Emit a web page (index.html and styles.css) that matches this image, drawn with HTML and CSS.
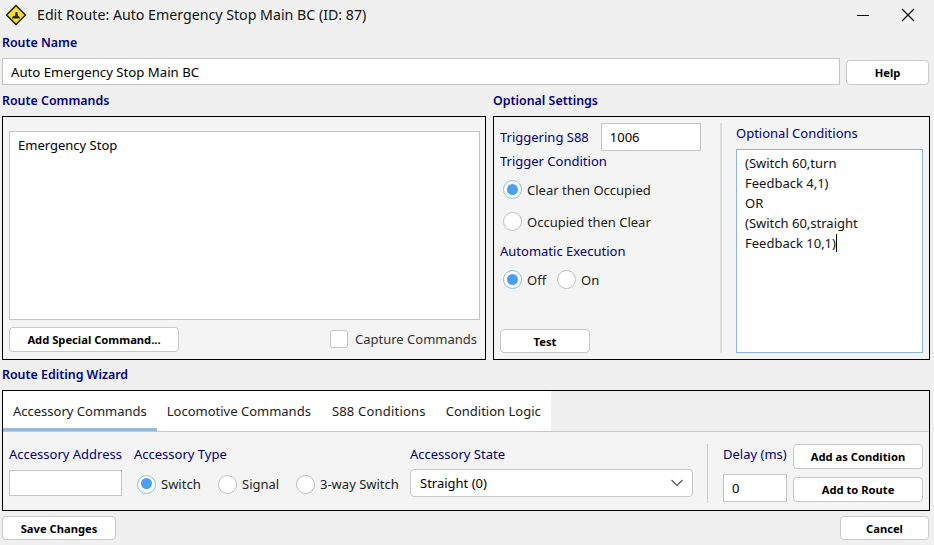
FILE: index.html
```html
<!DOCTYPE html>
<html lang="en">
<head>
    <meta charset="UTF-8">
    <meta name="viewport" content="width=device-width, initial-scale=1.0">
    <title>Edit Route</title>
    <link rel="stylesheet" href="styles.css">
</head>
<body>
    <div class="window">
        <header class="titlebar">
            <svg class="app-icon" width="24" height="24" viewBox="0 0 24 24">
                <path d="M12 2.5 L21.5 12 L12 21.5 L2.5 12 Z" fill="#f7dd2e" stroke="#2a2a1a" stroke-width="1.7" stroke-linejoin="round"/>
                <path d="M8 15.5 C8 13.6 9.4 13 11 12.8 L11.6 9 H13.4 L13.8 12.8 C15.2 13.2 16 14 16 15.5 Z" fill="#2a2a1a"/>
            </svg>
            <span class="title-text">Edit Route: Auto Emergency Stop Main BC (ID: 87)</span>
            <svg class="win-btn min-btn" width="12" height="12" viewBox="0 0 12 12"><path d="M0 6.5 H12" stroke="#111" stroke-width="1"/></svg>
            <svg class="win-btn close-btn" width="14" height="14" viewBox="0 0 14 14"><path d="M1 1 L13 13 M13 1 L1 13" stroke="#111" stroke-width="1.2"/></svg>
        </header>

        <div class="section-label name-label">Route Name</div>
        <div class="name-row">
            <input class="field name-field" type="text" value="Auto Emergency Stop Main BC">
            <button class="btn help-btn">Help</button>
        </div>

        <div class="columns">
            <section class="col-commands">
                <div class="section-label">Route Commands</div>
                <div class="panel commands-panel">
                    <div class="command-list">Emergency Stop</div>
                    <div class="commands-footer">
                        <button class="btn special-btn">Add Special Command...</button>
                        <label class="check-row"><span class="checkbox"></span>Capture Commands</label>
                    </div>
                </div>
            </section>
            <section class="col-settings">
                <div class="section-label">Optional Settings</div>
                <div class="panel settings-panel">
                    <div class="settings-left">
                        <div class="s88-row">
                            <span class="label">Triggering S88</span>
                            <input class="field s88-field" type="text" value="1006">
                        </div>
                        <div class="label trigger-label">Trigger Condition</div>
                        <div class="radio-line first"><span class="radio on"></span>Clear then Occupied</div>
                        <div class="radio-line second"><span class="radio"></span>Occupied then Clear</div>
                        <div class="label auto-label">Automatic Execution</div>
                        <div class="radio-inline">
                            <span class="radio-item"><span class="radio on"></span>Off</span>
                            <span class="radio-item"><span class="radio"></span>On</span>
                        </div>
                        <button class="btn test-btn">Test</button>
                    </div>
                    <div class="vline settings-line"></div>
                    <div class="settings-right">
                        <div class="label">Optional Conditions</div>
                        <div class="conditions">
                            <div>(Switch 60,turn</div>
                            <div>Feedback 4,1)</div>
                            <div>OR</div>
                            <div>(Switch 60,straight</div>
                            <div>Feedback 10,1)<span class="caret"></span></div>
                        </div>
                    </div>
                </div>
            </section>
        </div>

        <div class="section-label wizard-label">Route Editing Wizard</div>
        <div class="panel wizard">
            <div class="tabs">
                <div class="tab-strip">
                    <div class="tab active">Accessory Commands</div>
                    <div class="tab">Locomotive Commands</div>
                    <div class="tab tab-s88">S88 Conditions</div>
                    <div class="tab">Condition Logic</div>
                </div>
            </div>
            <div class="wizard-body">
                <div class="wiz-col addr-col">
                    <div class="label">Accessory Address</div>
                    <input class="field addr-field" type="text">
                </div>
                <div class="wiz-col type-col">
                    <div class="label">Accessory Type</div>
                    <div class="type-radios">
                        <span class="radio-item switch-item"><span class="radio on"></span>Switch</span>
                        <span class="radio-item signal-item"><span class="radio"></span>Signal</span>
                        <span class="radio-item"><span class="radio"></span>3-way Switch</span>
                    </div>
                </div>
                <div class="wiz-col state-col">
                    <div class="label">Accessory State</div>
                    <div class="select">
                        <span>Straight (0)</span>
                        <svg width="14" height="8" viewBox="0 0 14 8"><path d="M1.5 1 L7 6.5 L12.5 1" fill="none" stroke="#555" stroke-width="1.2"/></svg>
                    </div>
                </div>
                <div class="vline wizard-line"></div>
                <div class="delay-grid">
                    <div class="label delay-label">Delay (ms)</div>
                    <button class="btn">Add as Condition</button>
                    <input class="field delay-field" type="text" value="0">
                    <button class="btn route-btn">Add to Route</button>
                </div>
            </div>
        </div>

        <footer class="footer">
            <button class="btn save-btn">Save Changes</button>
            <button class="btn cancel-btn">Cancel</button>
        </footer>
    </div>
</body>
</html>
```
FILE: styles.css
```css
* {
    box-sizing: border-box;
}
html, body {
    margin: 0;
    padding: 0;
}
body {
    width: 934px;
    height: 545px;
    overflow: hidden;
    background: #f0f0f0;
    color: #000;
    font-family: "Noto Sans", "Open Sans", sans-serif;
    font-size: 13px;
    line-height: 18px;
}
.window {
    padding: 0 4px 0 2px;
}
.titlebar {
    display: flex;
    align-items: center;
    height: 30px;
    margin-left: -2px;
    margin-right: -4px;
    padding-left: 4px;
}
.app-icon {
    flex: none;
}
.title-text {
    margin-left: 9px;
    font-size: 14.2px;
    color: #111;
}
.min-btn {
    margin-left: auto;
}
.close-btn {
    margin-left: 32px;
    margin-right: 19px;
}
.section-label {
    font-weight: 600;
    font-size: 12.4px;
    color: #000080;
}
.name-label {
    margin-top: 4px;
}
.label {
    color: #000080;
    white-space: nowrap;
}
.name-row {
    display: flex;
    align-items: center;
    gap: 6px;
    margin-top: 6px;
    height: 27px;
}
.field {
    border: 1.5px solid #c4c4c4;
    background: #fff;
    font: inherit;
    color: #000;
    padding: 0 8px;
    outline: none;
}
.name-field {
    width: 838px;
    height: 27px;
    font-size: 13.2px;
}
.btn {
    height: 25px;
    border: 1px solid #c8c8c8;
    border-radius: 4px;
    background: #fff;
    font-family: inherit;
    font-size: 11.2px;
    font-weight: 700;
    color: #000;
    padding: 0;
}
.help-btn {
    width: 83px;
    margin-top: 1px;
}
.columns {
    display: flex;
    gap: 7px;
    margin-top: 7px;
}
.col-commands {
    width: 484px;
}
.col-settings {
    width: 437px;
}
.panel {
    border: 1px solid #000;
    background: #f4f4f4;
}
.commands-panel, .settings-panel {
    height: 244px;
    margin-top: 6px;
}
.commands-panel {
    padding: 14px 5px 0 6px;
}
.command-list {
    height: 189px;
    border: 1px solid #c4c4c4;
    background: #fff;
    padding: 4px 8px;
}
.commands-footer {
    display: flex;
    justify-content: space-between;
    align-items: center;
    margin-top: 7px;
}
.special-btn {
    width: 170px;
    height: 25px;
}
.check-row {
    display: flex;
    align-items: center;
    gap: 7px;
    color: #333;
    margin-right: 3px;
    margin-top: -2px;
}
.checkbox {
    width: 18px;
    height: 18px;
    border: 1.5px solid #c4c4c4;
    border-radius: 3px;
    background: #fff;
}
.settings-panel {
    display: flex;
    padding: 6px;
}
.settings-left {
    display: flex;
    flex-direction: column;
    width: 220px;
    height: 230px;
}
.s88-row {
    display: flex;
    align-items: center;
    gap: 12px;
    height: 28px;
}
.s88-field {
    width: 100px;
    height: 28px;
}
.trigger-label {
    margin-top: 1px;
}
.radio-line {
    display: flex;
    align-items: center;
    gap: 5px;
    margin-left: 3px;
    color: #222;
}
.radio-line.first {
    margin-top: 10px;
}
.radio-line.second {
    margin-top: 13px;
}
.auto-label {
    margin-top: 11px;
}
.radio-inline {
    display: flex;
    gap: 11px;
    margin-left: 3px;
    margin-top: 10px;
    color: #222;
}
.radio-item {
    display: inline-flex;
    align-items: center;
    gap: 5px;
    color: #222;
}
.radio {
    display: inline-block;
    flex: none;
    position: relative;
    width: 19px;
    height: 19px;
    border: 1.5px solid #c0c0c0;
    border-radius: 50%;
    background: #fff;
}
.radio.on {
    border-color: #8dbdf0;
}
.radio.on::after {
    content: "";
    position: absolute;
    left: 2.5px;
    top: 2.5px;
    width: 11px;
    height: 11px;
    border-radius: 50%;
    background: #4c9fec;
}
.test-btn {
    width: 90px;
    height: 24px;
    margin-top: auto;
}
.vline {
    flex: none;
    width: 2px;
    background: #dcdcdc;
}
.settings-line {
    height: 230px;
}
.settings-right {
    margin-left: 14px;
    padding-top: 1px;
}
.conditions {
    width: 187px;
    height: 204px;
    margin-top: 7px;
    border: 1px solid #8fb4da;
    background: #fff;
    padding: 3px 8px;
    line-height: 20px;
    color: #111;
}
.caret {
    display: inline-block;
    width: 1px;
    height: 18px;
    background: #000;
    vertical-align: -4px;
}
.wizard-label {
    margin-top: 6px;
}
.wizard {
    height: 121px;
    margin-top: 6px;
}
.tabs {
    height: 41px;
    border-bottom: 1px solid #c8c8c8;
    background: #f0f0f0;
}
.tab-strip {
    display: flex;
    width: 548px;
    height: 40px;
    background: #fff;
}
.tab {
    height: 40px;
    padding: 11px 10px 0 10px;
    color: #222;
    white-space: nowrap;
}
.tab.active {
    border-bottom: 3px solid #94b9dd;
}
.tab-s88 {
    margin-left: 1px;
    letter-spacing: 0.2px;
}
.wizard-body {
    display: flex;
    height: 78px;
    padding: 12px 6px 0 6px;
}
.wiz-col {
    flex: none;
    padding-top: 1px;
}
.addr-col {
    width: 125px;
}
.addr-field {
    display: block;
    width: 113px;
    height: 26px;
    margin-top: 7px;
}
.type-col {
    width: 276px;
}
.type-radios {
    display: flex;
    margin-left: 3px;
    margin-top: 8px;
    height: 26px;
    align-items: center;
}
.switch-item {
    width: 81px;
}
.signal-item {
    width: 78px;
}
.state-col {
    width: 297px;
}
.select {
    display: flex;
    align-items: center;
    justify-content: space-between;
    width: 283px;
    height: 28px;
    margin-top: 6px;
    padding: 0 8px 0 9px;
    border: 1.5px solid #c8c8c8;
    border-radius: 4px;
    background: #fff;
}
.wizard-line {
    width: 1px;
    height: 59px;
    background: #c8c8c8;
}
.delay-grid {
    display: grid;
    grid-template-columns: 64px 130px;
    grid-template-rows: 25px 28px;
    column-gap: 6px;
    row-gap: 5px;
    margin-left: 15px;
    margin-top: 0;
}
.delay-label {
    align-self: start;
    margin-top: 1px;
}
.route-btn {
    align-self: end;
}
.delay-field {
    width: 64px;
    height: 28px;
}
.footer {
    display: flex;
    justify-content: space-between;
    margin-top: 5px;
}
.save-btn {
    width: 114px;
    height: 24px;
}
.cancel-btn {
    width: 89px;
    height: 24px;
    margin-right: 1px;
}
```
